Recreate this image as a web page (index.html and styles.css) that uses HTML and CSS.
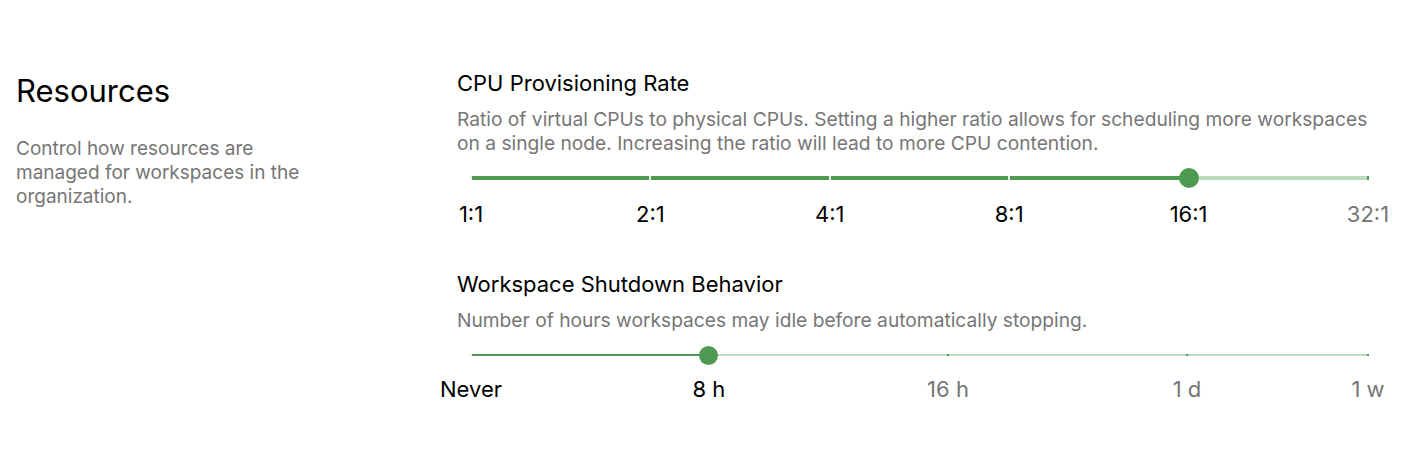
FILE: index.html
```html
<!DOCTYPE html>
<html lang="en">
<head>
<meta charset="utf-8">
<title>Resources</title>
<link rel="stylesheet" href="styles.css">
</head>
<body>
<div class="page">
  <div class="intro">
    <h1 class="intro-title">Resources</h1>
    <p class="intro-text">Control how resources are managed for workspaces in the organization.</p>
  </div>
  <div class="settings">
    <section class="setting">
      <h2 class="setting-title">CPU Provisioning Rate</h2>
      <p class="setting-text">Ratio of virtual CPUs to physical CPUs. Setting a higher ratio allows for scheduling more workspaces on a single node. Increasing the ratio will lead to more CPU contention.</p>
      <div class="slider slider-thick">
        <div class="rail"></div>
        <div class="track" style="width:80%"></div>
        <span class="mark mark-on" style="left:0%"></span>
        <span class="mark mark-on" style="left:20%"></span>
        <span class="mark mark-on" style="left:40%"></span>
        <span class="mark mark-on" style="left:60%"></span>
        <span class="mark mark-on" style="left:80%"></span>
        <span class="mark mark-off" style="left:100%"></span>
        <span class="thumb" style="left:80%"></span>
        <span class="label label-on" style="left:0%">1:1</span>
        <span class="label label-on" style="left:20%">2:1</span>
        <span class="label label-on" style="left:40%">4:1</span>
        <span class="label label-on" style="left:60%">8:1</span>
        <span class="label label-on" style="left:80%">16:1</span>
        <span class="label label-off" style="left:100%">32:1</span>
      </div>
    </section>
    <section class="setting">
      <h2 class="setting-title">Workspace Shutdown Behavior</h2>
      <p class="setting-text">Number of hours workspaces may idle before automatically stopping.</p>
      <div class="slider slider-thin">
        <div class="rail"></div>
        <div class="track" style="width:26.53%"></div>
        <span class="mark mark-on" style="left:0%"></span>
        <span class="mark mark-on" style="left:26.53%"></span>
        <span class="mark mark-off" style="left:53.18%"></span>
        <span class="mark mark-off" style="left:79.82%"></span>
        <span class="mark mark-off" style="left:100%"></span>
        <span class="thumb" style="left:26.53%"></span>
        <span class="label label-on" style="left:0%">Never</span>
        <span class="label label-on" style="left:26.53%">8 h</span>
        <span class="label label-off" style="left:53.18%">16 h</span>
        <span class="label label-off" style="left:79.82%">1 d</span>
        <span class="label label-off" style="left:100%">1 w</span>
      </div>
    </section>
  </div>
</div>
</body>
</html>
```

FILE: styles.css
```css
* { box-sizing: border-box; }
html, body { margin: 0; background: #fff; }
body {
  font-family: Inter, "Noto Sans", sans-serif;
  color: #000;
}
.page {
  display: flex;
  padding: 0 30px 0 16px;
}
.intro {
  width: 441px;
  flex: none;
  padding-top: 73px;
}
.intro-title {
  margin: 0;
  font-size: 31px;
  line-height: 36px;
  font-weight: 400;
}
.intro-text {
  margin: 28px 0 0;
  max-width: 320px;
  font-size: 19px;
  line-height: 24px;
  color: #767676;
}
.settings {
  flex: 1;
  padding-top: 69px;
  display: flex;
  flex-direction: column;
  gap: 44px;
}
.setting-title {
  margin: 0;
  font-size: 22px;
  line-height: 28px;
  font-weight: 400;
}
.setting-text {
  margin: 10px 0 0;
  font-size: 19.2px;
  line-height: 24px;
  color: #767676;
}
.slider {
  position: relative;
  margin: 0 14px;
  height: 71px;
}
.rail, .track {
  position: absolute;
  left: 0;
  top: 23px;
  border-radius: 2px;
}
.rail { width: 100%; background: #bcdabe; }
.track { background: #4f9a53; }
.slider-thick .rail, .slider-thick .track { height: 4px; margin-top: -2px; }
.slider-thin .rail, .slider-thin .track { height: 2px; margin-top: -1px; }
.mark {
  position: absolute;
  top: 23px;
  width: 2px;
  height: 2px;
  margin: -1px 0 0 -1px;
}
.slider-thick .mark { height: 4px; margin-top: -2px; }
.mark-on { background: #e6f1e6; }
.mark-off { background: #4f9a53; }
.thumb {
  position: absolute;
  top: 23px;
  width: 20px;
  height: 20px;
  margin: -10px 0 0 -10px;
  border-radius: 50%;
  background: #4f9a53;
}
.slider-thin .thumb { width: 19px; height: 19px; margin: -9.5px 0 0 -9.5px; }
.label {
  position: absolute;
  top: 47px;
  transform: translateX(-50%);
  font-size: 22px;
  line-height: 24px;
  white-space: nowrap;
}
.slider-thin .label { top: 45px; }
.label-on { color: #000; }
.label-off { color: #767676; }
```
